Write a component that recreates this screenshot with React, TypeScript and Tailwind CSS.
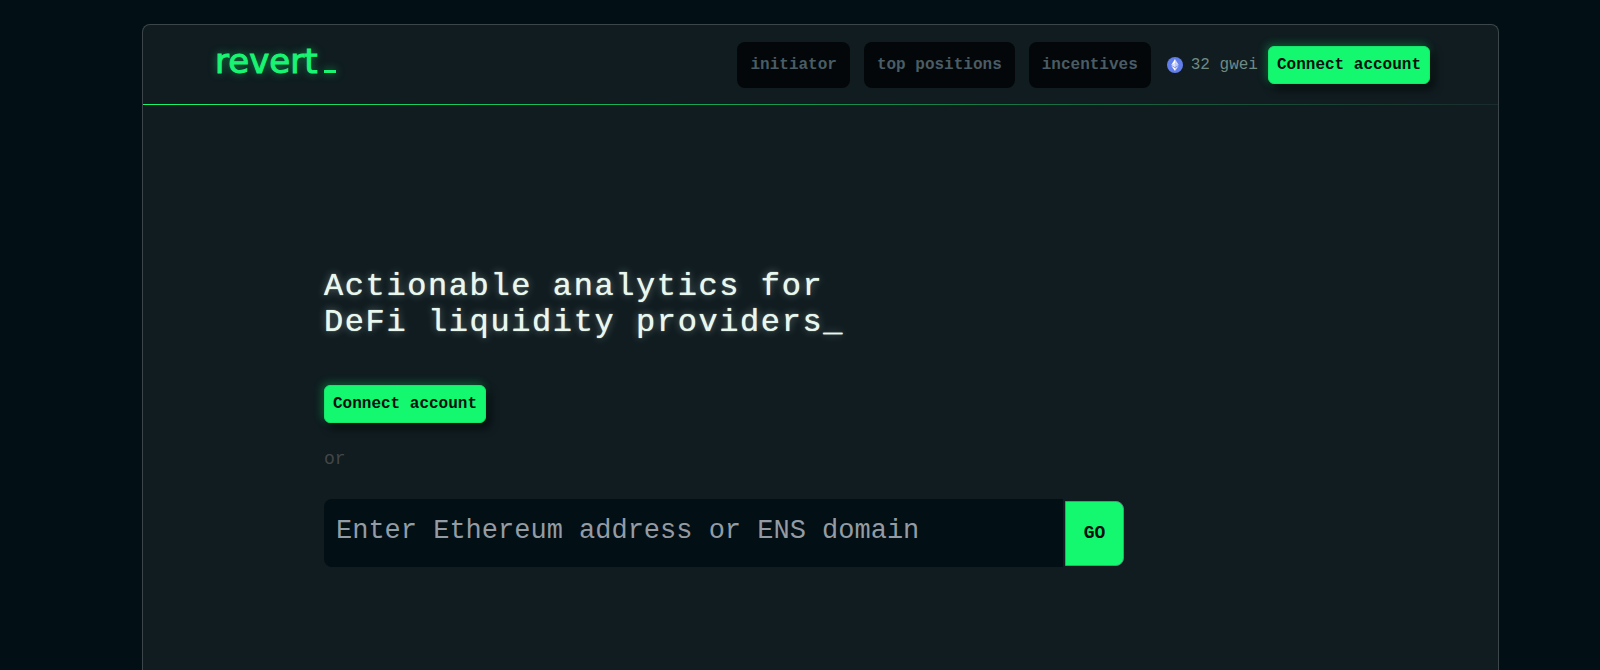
import React from 'react';

const NAV_ITEMS: string[] = ['initiator', 'top positions', 'incentives'];

const Logo: React.FC = () => (
  <a
    href="#"
    aria-label="revert"
    className="flex items-baseline gap-1.5 pb-2 font-['DejaVu_Sans'] text-[34px] leading-10 text-[#19f573] [-webkit-text-stroke:1px_#19f573] [text-shadow:0_0_8px_rgba(20,245,112,0.6)]"
  >
    <span>revert</span>
    <span className="h-[3px] w-3 bg-[#19f573] shadow-[0_0_8px_rgba(20,245,112,0.6)]" />
  </a>
);

const EthIcon: React.FC = () => (
  <svg className="h-4 w-4 shrink-0" viewBox="0 0 32 32" aria-hidden="true">
    <circle cx="16" cy="16" r="16" fill="#627eea" />
    <path d="M16 4v8.87l7.5 3.35z" fill="#fff" fillOpacity="0.7" />
    <path d="M16 4L8.5 16.22 16 12.87z" fill="#fff" />
    <path d="M16 21.97V28l7.5-10.38z" fill="#fff" fillOpacity="0.7" />
    <path d="M16 28v-6.03l-7.5-4.35z" fill="#fff" />
    <path d="M16 20.57l7.5-4.35-7.5-3.35z" fill="#fff" fillOpacity="0.6" />
    <path d="M8.5 16.22l7.5 4.35v-7.7z" fill="#fff" fillOpacity="0.8" />
  </svg>
);

const ConnectButton: React.FC = () => (
  <button
    type="button"
    className="h-[38px] shrink-0 cursor-pointer rounded-md border border-[#17e66c] bg-[#14f870] px-2 text-base font-bold whitespace-nowrap text-[#03100f] shadow-[4px_5px_9px_rgba(0,0,0,0.6),-2px_-2px_8px_rgba(20,248,112,0.3)]"
  >
    Connect account
  </button>
);

const Header: React.FC = () => (
  <header>
    <div className="flex h-[79px] items-center justify-between pr-[68px] pl-[72px]">
      <Logo />
      <div className="flex items-center">
        <nav className="flex gap-3.5">
          {NAV_ITEMS.map((item) => (
            <a
              key={item}
              href="#"
              className="flex h-[46px] items-center rounded-lg bg-[#030709] px-[13px] text-base font-bold whitespace-nowrap text-[#4a5c64]"
            >
              {item}
            </a>
          ))}
        </nav>
        <div className="ml-4 flex items-center gap-2 text-base whitespace-nowrap text-[#6f8a84]">
          <EthIcon />
          <span>32 gwei</span>
        </div>
        <div className="ml-2.5 flex">
          <ConnectButton />
        </div>
      </div>
    </div>
    <div className="h-px bg-[linear-gradient(to_right,#14f870,#1a2b2c)]" />
  </header>
);

const AddressForm: React.FC = () => (
  <form className="mt-7 flex max-w-[800px] items-center gap-0.5" onSubmit={(e) => e.preventDefault()}>
    <input
      type="text"
      aria-label="Ethereum address or ENS domain"
      placeholder="Enter Ethereum address or ENS domain"
      className="h-[68px] min-w-0 flex-1 rounded-l-lg bg-[#020f14] px-3 pb-1 text-[27px] text-gray-200 outline-none placeholder:text-[#939ba5]"
    />
    <button
      type="submit"
      className="h-[65px] w-[59px] cursor-pointer rounded-r-lg border border-[#6b8589] bg-[#14f870] text-lg font-bold text-[#03100f]"
    >
      GO
    </button>
  </form>
);

export default function App() {
  return (
    <div className="flex min-h-screen bg-[#020f14] pt-6 pr-[101px] pl-[142px] font-['Liberation_Mono',monospace]">
      <div className="flex-1 rounded-t-lg border border-b-0 border-[#3c464a] bg-[#101c20]">
        <Header />
        <main className="px-[181px] pt-[164px]">
          <h1 className="text-[32px] leading-9 font-medium tracking-wider text-[#e8f8ee] [text-shadow:0_0_1px_#e8f8ee,0_0_8px_rgba(232,248,238,0.4)]">
            Actionable analytics for
            <br />
            DeFi liquidity providers_
          </h1>
          <div className="mt-11 flex">
            <ConnectButton />
          </div>
          <p className="mt-6 text-lg leading-6 text-[#434647]">or</p>
          <AddressForm />
        </main>
      </div>
    </div>
  );
}
